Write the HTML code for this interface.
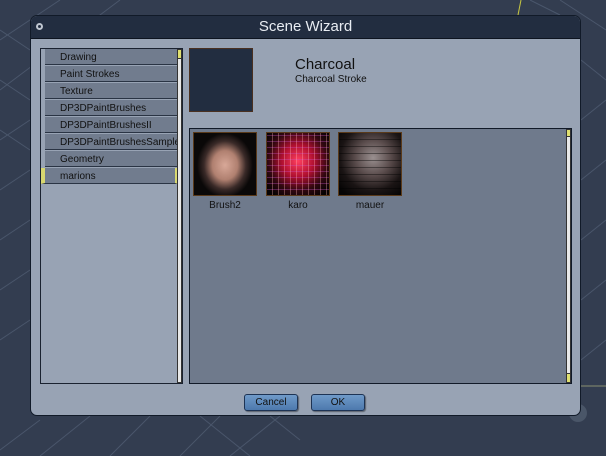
<!DOCTYPE html>
<html><head><meta charset="utf-8"><style>
*{margin:0;padding:0;box-sizing:border-box}
body{width:606px;height:456px;overflow:hidden;background:#333d50;font-family:"Liberation Sans",sans-serif;position:relative}
.abs{position:absolute}
#dlg{left:30px;top:15px;width:551px;height:401px;background:#98a3b4;border:1px solid #111a28;border-radius:7px;overflow:hidden}
#title{left:0;top:0;width:100%;height:23px;background:#222d40;border-bottom:1px solid #0d1420;color:#e8ecf2;font-size:15px;text-align:center;line-height:22px}
#list{left:9px;top:32px;width:143px;height:336px;border:1px solid #1a2230;background:#98a3b4}
.it{position:absolute;left:4px;width:133px;height:16px;background:#717c8e;border-bottom:1px solid #2a3444;font-size:10px;color:#111;line-height:17px;padding-left:15px;white-space:nowrap;overflow:hidden}
#grid{left:158px;top:112px;width:383px;height:256px;background:#6f7a8c;border:1px solid #111a28}
.th{position:absolute;top:3px;width:64px;height:64px;border:1px solid #5a3a1a}
.lb{position:absolute;top:71px;width:64px;text-align:center;font-size:10px;color:#111}
.btn{position:absolute;top:378px;width:54px;height:17px;border:1px solid #1d3354;border-radius:3px;background:linear-gradient(#6f9ac9,#4d79ad);font-size:10px;text-align:center;line-height:16px;color:#111;box-shadow:1px 1px 1px rgba(0,0,0,.4)}
</style></head><body>
<svg class="abs" style="left:0;top:0" width="606" height="456">
<g stroke="#4a566b" stroke-width="1" fill="none">
<path d="M0 40 L60 0 M0 90 L120 0 M0 140 L30 120 M0 190 L30 170 M0 240 L30 220 M0 290 L30 270 M0 340 L30 320 M0 30 L30 50 M0 80 L30 100 M0 130 L30 150"/>
<path d="M0 450 L40 420 M40 456 L90 416 M110 456 L150 416 M180 456 L220 416 M250 456 L200 416 M300 440 L270 416 M230 456 L280 416"/>
<path d="M581 60 L606 80 M581 120 L606 100 M581 180 L606 160 M581 240 L606 220 M581 300 L606 280 M581 360 L606 340 M560 0 L606 30 M530 0 L560 15"/>
</g>
<path d="M521 0 L518 15" stroke="#c8c840" stroke-width="1"/>
<path d="M581 386 L606 386" stroke="#8a9070" stroke-width="1"/>
<circle cx="578" cy="413" r="9" fill="#4a5668"/>
</svg>
<div id="dlg" class="abs">
<div id="title" class="abs">Scene Wizard</div>
<div class="abs" style="left:5px;top:7px;width:7px;height:7px;border-radius:50%;border:2px solid #bfc6d0"></div>
<div id="list" class="abs">
<div class="it" style="top:0">Drawing</div>
<div class="it" style="top:17px">Paint Strokes</div>
<div class="it" style="top:34px">Texture</div>
<div class="it" style="top:51px">DP3DPaintBrushes</div>
<div class="it" style="top:68px">DP3DPaintBrushesII</div>
<div class="it" style="top:85px">DP3DPaintBrushesSamples</div>
<div class="it" style="top:102px">Geometry</div>
<div class="it" style="top:119px;left:0;width:137px;border-left:4px solid #d8d870;border-right:3px solid #d8d870;padding-left:15px">marions</div>
<div class="abs" style="left:136px;top:0;width:5px;height:334px;background:#e8e8e8;border:1px solid #333"></div>
<div class="abs" style="left:136px;top:0;width:5px;height:10px;background:#e0e070;border:1px solid #333"></div>
</div>
<div class="abs" style="left:158px;top:32px;width:64px;height:64px;background:#222d40;border:1px solid #4a3020"></div>
<div class="abs" style="left:264px;top:40px;font-size:15px;color:#111">Charcoal</div>
<div class="abs" style="left:264px;top:58px;font-size:10px;color:#111">Charcoal Stroke</div>
<div id="grid" class="abs">
<div class="th" style="left:3px;background:radial-gradient(ellipse 45% 52% at 50% 52%,#d8a898 0%,#b08070 45%,#3a2a28 75%,#0a0808 100%)"></div>
<div class="lb" style="left:3px">Brush2</div>
<div class="th" style="left:76px;background:repeating-linear-gradient(90deg,transparent 0 5px,rgba(255,180,180,.35) 5px 6px),repeating-linear-gradient(0deg,transparent 0 5px,rgba(200,80,200,.35) 5px 6px),radial-gradient(circle at 50% 45%,#ff4060 0%,#b01030 35%,#300810 65%,#050203 90%)"></div>
<div class="lb" style="left:76px">karo</div>
<div class="th" style="left:148px;background:repeating-linear-gradient(0deg,transparent 0 6px,rgba(0,0,0,.4) 6px 7px),radial-gradient(circle at 55% 40%,#9a9090 0%,#5a4c4c 35%,#1a1414 65%,#050404 90%)"></div>
<div class="lb" style="left:148px">mauer</div>
<div class="abs" style="left:376px;top:0;width:5px;height:254px;background:#e8e8e8;border:1px solid #333"></div>
<div class="abs" style="left:376px;top:244px;width:5px;height:10px;background:#e0e070;border:1px solid #333"></div>
<div class="abs" style="left:376px;top:0;width:5px;height:8px;background:#e0e070;border:1px solid #333"></div>
</div>
<div class="btn" style="left:213px">Cancel</div>
<div class="btn" style="left:280px">OK</div>
</div>
</body></html>
